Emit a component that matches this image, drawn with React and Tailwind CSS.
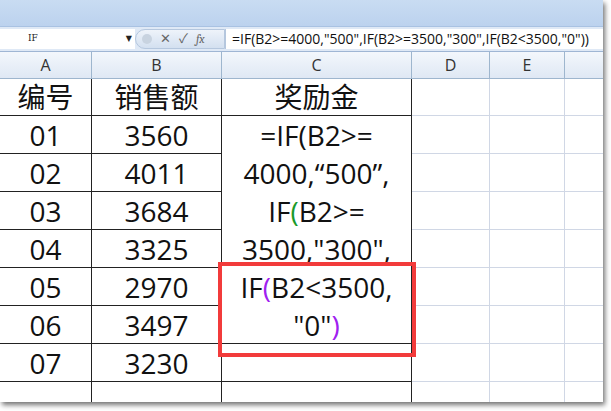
export default function App() {
  const ids = ["01","02","03","04","05","06","07"];
  const vals = ["3560","4011","3684","3325","2970","3497","3230"];
  const f = { fontFamily: "'Open Sans','Noto Sans CJK SC',sans-serif" };
  const dark = "border-[#222]";
  return (
    <div className="w-[611px] h-[411px] bg-white" style={f}>
      <div className="w-[603px] h-[402px] overflow-hidden bg-white shadow-[2px_3px_5px_rgba(0,0,0,0.55)] flex flex-col relative">
        <div className="h-[30px] bg-gradient-to-b from-[#c9dcf2] to-[#bcd2ee] border-b border-[#a9c2e2]" />
        <div className="h-[27px] bg-[#dfe9f6] flex items-center border-b border-[#9fb6d4]">
          <div className="w-[135px] h-[20px] bg-white flex items-center pl-[28px] text-[9px] text-[#222]" style={{fontFamily:"'DejaVu Serif',serif"}}>
            IF<span className="ml-auto mr-[3px] text-[8px]">▼</span>
          </div>
          <div className="w-[90px] h-[20px] flex items-center gap-[8px] pl-[6px] text-[#666] text-[13px] bg-gradient-to-b from-[#eef3fa] to-[#d3e0f0] rounded-l-full border border-[#b5c7de]">
            <span className="w-[10px] h-[10px] rounded-full bg-[#c8d3e0]" />
            <span>✕</span><span>✓</span><span className="italic font-serif text-[12px]">fx</span>
          </div>
          <div className="flex-1 h-[20px] bg-white border-l border-[#b5c7de] pl-[6px] text-[14px] text-[#111] whitespace-nowrap leading-[20px] overflow-hidden">=IF(B2&gt;=4000,"500",IF(B2&gt;=3500,"300",IF(B2&lt;3500,"0"))</div>
        </div>
        <div className="grid grid-cols-[92px_130px_190px_78px_75px_60px] grid-rows-[27px_37px_38px_38px_38px_38px_38px_38px_38px_20px] text-[#111]">
          {["A","B","C","D","E",""].map((c,i)=>(
            <div key={c+i} className="bg-gradient-to-b from-[#f3f7fc] to-[#dfe8f4] border-r border-b border-[#9eb6ce] flex items-center justify-center text-[16px] text-[#333]">{c}</div>
          ))}
          <div className={`border-r border-b ${dark} flex items-center justify-center text-[28px]`}>编号</div>
          <div className={`border-r border-b ${dark} flex items-center justify-center text-[28px]`}>销售额</div>
          <div className={`border-r border-b ${dark} flex items-center justify-center text-[28px]`}>奖励金</div>
          <div className="border-r border-b border-[#d0d7e5]" /><div className="border-r border-b border-[#d0d7e5]" /><div className="border-b border-[#d0d7e5]" />
          {ids.map((id,i)=>(
            <>
              <div key={"a"+i} className={`border-r border-b ${dark} flex items-center justify-center text-[28px]`} style={{gridRow:i+3,gridColumn:1}}>{id}</div>
              <div key={"b"+i} className={`border-r border-b ${dark} flex items-center justify-center text-[28px]`} style={{gridRow:i+3,gridColumn:2}}>{vals[i]}</div>
              <div key={"d"+i} className="border-r border-b border-[#d0d7e5]" style={{gridRow:i+3,gridColumn:4}} />
              <div key={"e"+i} className="border-r border-b border-[#d0d7e5]" style={{gridRow:i+3,gridColumn:5}} />
              <div key={"f"+i} className="border-b border-[#d0d7e5]" style={{gridRow:i+3,gridColumn:6}} />
            </>
          ))}
          <div className={`col-start-3 row-start-3 row-span-6 border-r border-b ${dark} flex flex-col items-center text-[28px] leading-[38px]`}>
            <div>=IF(B2&gt;=</div>
            <div>4000,“500”,</div>
            <div>IF<span className="text-[#1a9a2a]">(</span>B2&gt;=</div>
            <div>3500,"300",</div>
            <div>IF<span className="text-[#a020f0]">(</span>B2&lt;3500,</div>
            <div>"0"<span className="text-[#a020f0]">)</span></div>
          </div>
          <div className={`col-start-3 row-start-9 border-r border-b ${dark}`} />
          <div className={`col-start-1 row-start-10 border-r ${dark}`} />
          <div className={`col-start-2 row-start-10 border-r ${dark}`} />
          <div className={`col-start-3 row-start-10 border-r ${dark}`} />
          <div className="col-start-4 row-start-10 border-r border-[#d0d7e5]" />
          <div className="col-start-5 row-start-10 border-r border-[#d0d7e5]" />
        </div>
        <div className="absolute left-[218px] top-[262px] w-[198px] h-[95px] border-[4px] border-[#f23b3b]" />
      </div>
    </div>
  );
}
